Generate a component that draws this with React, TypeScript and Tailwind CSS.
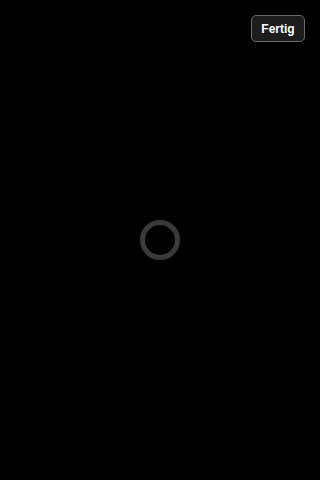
export default function App() {
  return (
    <div className="w-[320px] h-[480px] bg-black flex flex-col font-['Liberation_Sans',Arial,sans-serif]">
      <div className="flex justify-end pt-[15px] pr-[15px]">
        <button className="w-[54px] h-[27px] rounded-[5px] border border-[#6a6a6a] bg-[#1c1c1c] text-white text-[12px] font-bold">
          Fertig
        </button>
      </div>
      <div className="flex-1 flex items-center justify-center pb-[42px]">
        <div className="w-[40px] h-[40px] rounded-full border-[5px] border-[#3a3a3a]" />
      </div>
    </div>
  );
}
